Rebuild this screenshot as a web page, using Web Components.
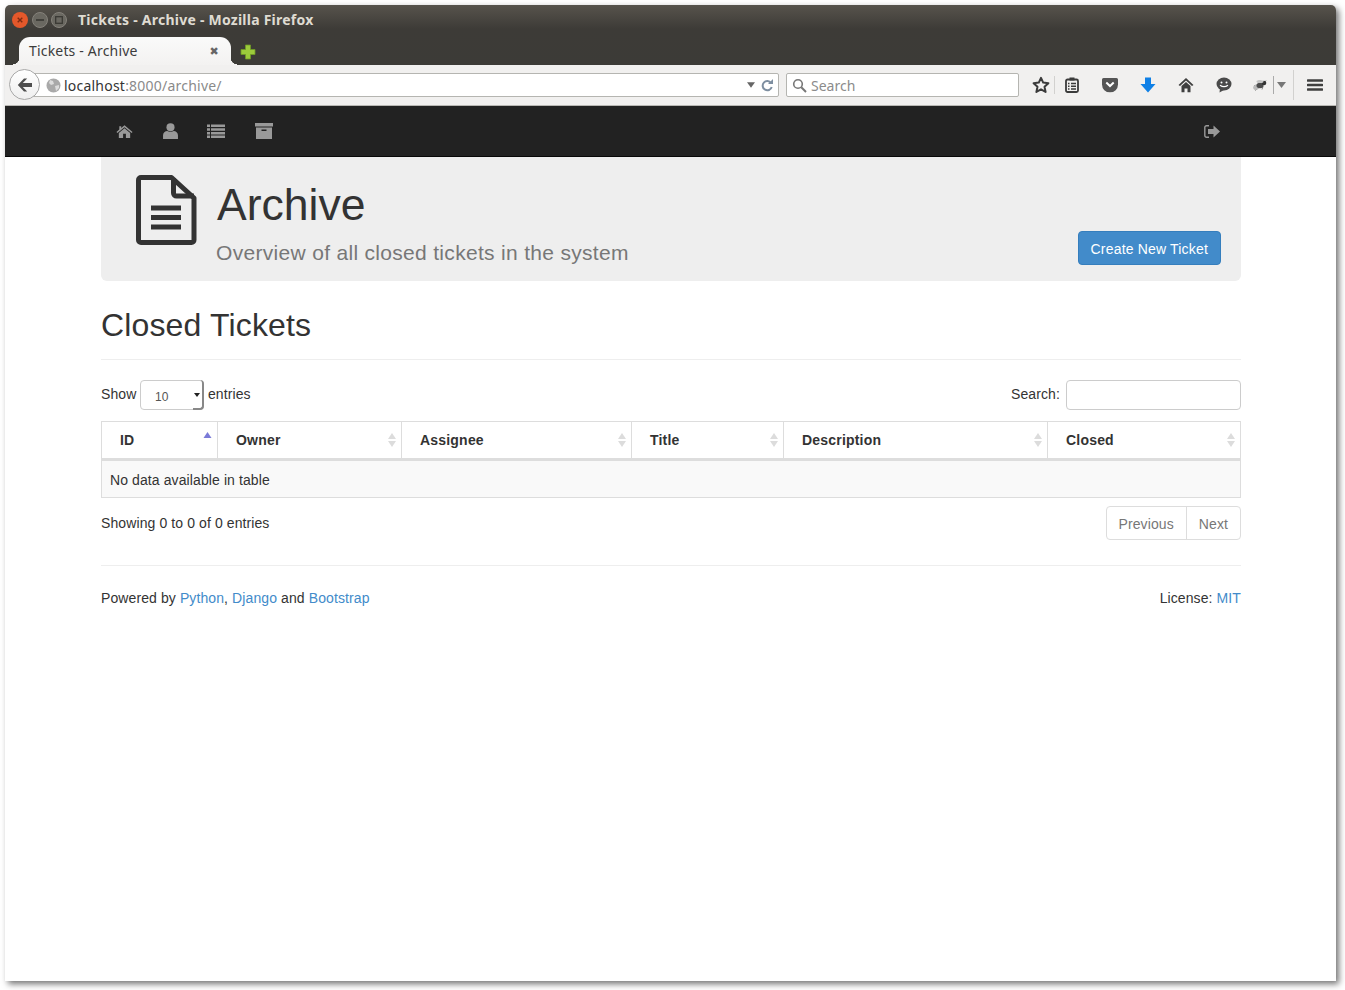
<!DOCTYPE html>
<html>
<head>
<meta charset="utf-8">
<title>Tickets - Archive</title>
<style>
  html, body { margin: 0; height: 100%; background: #fff; }
  body { padding: 5px 9px 9px 5px; box-sizing: border-box; width: 1345px; height: 990px; overflow: hidden; font-family: "Liberation Sans", Arial, sans-serif; }
</style>
</head>
<body>
<browser-window>
  <site-navbar></site-navbar>
  <page-content>
    <archive-header></archive-header>
    <tickets-table></tickets-table>
    <site-footer></site-footer>
  </page-content>
</browser-window>

<script>
class BrowserWindow extends HTMLElement {
  constructor() {
    super();
    this.attachShadow({ mode: "open" }).innerHTML = `
      <style>
        :host { display: flex; flex-direction: column; width: 1331px; height: 976px; background: #fff; border-radius: 5px 5px 0 0; box-shadow: 3px 3px 6px rgba(0,0,0,.55); }
      </style>
      <browser-chrome></browser-chrome>
      <slot></slot>
    `;
  }
}

class BrowserChrome extends HTMLElement {
  constructor() {
    super();
    this.attachShadow({ mode: "open" }).innerHTML = `
      <style>
        :host { display: block; font-family: "Noto Sans", "DejaVu Sans", sans-serif; }
        .top { height: 60px; background: linear-gradient(#57534c, #3d3b37 40%, #3c3b37); border-radius: 5px 5px 0 0; position: relative; }
        .titlebar { height: 30px; display: flex; align-items: center; padding-left: 7px; }
        .ctl { width: 16px; height: 16px; margin-right: 3.5px; flex: none; display: block; }
        .title { color: #dfdbd2; font-weight: 700; font-size: 14px; margin-left: 7.500px; padding-bottom: 2px; letter-spacing: .24px; }
        .tabrow { height: 30px; display: flex; align-items: flex-end; padding-left: 14px; }
        .tab { width: 212px; height: 28px; background: linear-gradient(#fafafa, #f3f2f1); border-radius: 11px 11px 0 0; display: flex; align-items: center; justify-content: space-between; padding: 0 12px 2px 10px; box-sizing: border-box; font-size: 14px; letter-spacing: .18px; color: #3c3c3c; position: relative; }
        .tab::before, .tab::after { content: ""; position: absolute; bottom: 0; width: 6px; height: 7px; }
        .tab::before { left: -6px; background: radial-gradient(circle at 0 0, transparent 6px, #f3f2f1 6.500px); }
        .tab::after { right: -6px; background: radial-gradient(circle at 100% 0, transparent 6px, #f3f2f1 6.500px); }
        .tab b { font-size: 11px; color: #666; }
        .plus { margin: 0 0 5px 9px; display: block; }
        .nav { height: 40px; background: #f1f0ef; border-bottom: 1px solid #b9b8b4; display: flex; align-items: center; position: relative; }
        .back { position: absolute; left: 4px; top: 4px; width: 31px; height: 31px; box-sizing: border-box; border-radius: 50%; background: linear-gradient(#fff, #efefef); border: 1px solid #a8a8a8; z-index: 1; display: flex; align-items: center; justify-content: center; }
        .url { margin-left: 20px; width: 754px; height: 24px; box-sizing: border-box; background: #fff; border: 1px solid #b5b5b1; border-radius: 0 2px 2px 0; display: flex; align-items: center; padding-left: 20px; font-size: 14px; letter-spacing: .22px; color: #333; position: relative; }
        .url span { color: #8a8a8a; }
        .globe { margin-right: 3px; flex: none; display: block; }
        .url .end { margin-left: auto; display: flex; align-items: center; gap: 6px; padding-right: 5px; }
        .search { margin-left: 7px; width: 233px; height: 24px; box-sizing: border-box; background: #fff; border: 1px solid #b5b5b1; border-radius: 2px; display: flex; align-items: center; gap: 4px; padding-left: 5px; font-size: 14px; color: #8b8b8b; }
        .tools { display: flex; align-items: center; flex: 1; position: relative; height: 100%; }
        .tools svg { position: absolute; top: 50%; transform: translateY(-50%); display: block; }
        .sep { position: absolute; width: 1px; background: #d2d1cf; }
      </style>
      <div class="top">
        <div class="titlebar">
          <svg class="ctl" viewBox="0 0 16 16"><circle cx="8" cy="8" r="8" fill="#e4582b"/><path d="M5.700 5.700l4.600 4.600M10.300 5.700l-4.600 4.600" stroke="#7e2c12" stroke-width="1.400"/></svg>
          <svg class="ctl" viewBox="0 0 16 16"><circle cx="8" cy="8" r="7.500" fill="#6a6861" stroke="#85827b"/><path d="M4 8h8" stroke="#3a3934" stroke-width="1.700"/></svg>
          <svg class="ctl" viewBox="0 0 16 16"><circle cx="8" cy="8" r="7.500" fill="#6a6861" stroke="#85827b"/><rect x="4.700" y="4.700" width="6.600" height="6.600" fill="none" stroke="#3a3934" stroke-width="1.300"/></svg>
          <div class="title">Tickets - Archive - Mozilla Firefox</div>
        </div>
        <div class="tabrow">
          <div class="tab">Tickets - Archive<b>✖</b></div>
          <svg class="plus" width="16" height="16" viewBox="0 0 16 16"><path d="M5.500 1h5v4.500H15v5h-4.500V15h-5v-4.500H1v-5h4.500z" fill="#9ccb3b" stroke="#6f9a25" stroke-width=".8"/></svg>
        </div>
      </div>
      <div class="nav">
        <div class="back"><svg width="16" height="14" viewBox="0 0 16 14"><path d="M7 0.500L0.800 7 7 13.500h3.200L5.800 9H15V5H5.800l4.400-4.500z" fill="#4e4e4e"/></svg></div>
        <div class="url">
          <svg class="globe" width="15" height="15" viewBox="0 0 15 15"><circle cx="7.500" cy="7.500" r="7" fill="#a9a9a9"/><path d="M4 2l3 1 1 3-3 1-2-2zM9 8l4-1 0 3-3 3z" fill="#dcdcdc"/></svg>
          localhost<span>:8000/archive/</span>
          <div class="end">
            <svg width="8" height="6" viewBox="0 0 9 6"><path d="M0 0h9L4.500 6z" fill="#666"/></svg>
            <svg width="12" height="13" viewBox="0 0 12 13"><path d="M10 4A4.600 4.600 0 1 0 10.700 8" fill="none" stroke="#7d8ea0" stroke-width="2"/><path d="M7 5h5V0z" fill="#7d8ea0"/></svg>
          </div>
        </div>
        <div class="search">
          <svg width="15" height="15" viewBox="0 0 15 15"><circle cx="6" cy="6" r="4.300" fill="none" stroke="#777" stroke-width="1.600"/><path d="M9.300 9.300L14 14" stroke="#777" stroke-width="2"/></svg>
          Search
        </div>
        <div class="tools">
          <svg style="left:13px" width="18" height="18" viewBox="0 0 18 18"><path d="M9 1.800l2.200 4.800 5.200.6-3.900 3.500 1.100 5.200L9 13.300l-4.600 2.600 1.100-5.200L1.600 7.200l5.200-.6z" fill="none" stroke="#3b3b3b" stroke-width="2" stroke-linejoin="round"/></svg>
          <div class="sep" style="left:35px;top:11px;height:18px"></div>
          <svg style="left:46px" width="14" height="16" viewBox="0 0 14 16"><rect x="1" y="2.500" width="12" height="12.500" rx="1.500" fill="none" stroke="#3b3b3b" stroke-width="1.800"/><rect x="4.500" y="0.500" width="5" height="3" fill="#3b3b3b"/><path d="M3 6.500h1.500M6 6.500h5M3 9.200h1.500M6 9.200h5M3 12h1.500M6 12h5" stroke="#3b3b3b" stroke-width="1.400"/></svg>
          <svg style="left:83px" width="16" height="15" viewBox="0 0 16 15"><path d="M1.500 0.500h13A1.500 1.500 0 0 1 16 2v5a8 8 0 0 1-16 0V2A1.500 1.500 0 0 1 1.500 0.500z" fill="#555"/><path d="M4.300 5L8 8.500 11.700 5" fill="none" stroke="#fff" stroke-width="2"/></svg>
          <svg style="left:121px" width="16" height="16" viewBox="0 0 16 16"><path d="M5 0.500h6V7h4.500L8 15.500.500 7H5z" fill="#0f80e6"/></svg>
          <svg style="left:159px" width="16" height="15" viewBox="0 0 16 15"><path d="M8 0.500L15.500 7.500 14 8.500 8 3 2 8.500.500 7.500z" fill="#3f3f3f"/><path d="M3.500 8.500L8 4.500l4.500 4V15H9.500v-4h-3v4h-3z" fill="#3f3f3f"/></svg>
          <svg style="left:197px" width="16" height="16" viewBox="0 0 16 16"><ellipse cx="8" cy="7" rx="7.500" ry="6.500" fill="#4a4a4a"/><path d="M4 11l-.5 4.500L8 13z" fill="#4a4a4a"/><circle cx="5.500" cy="5.500" r="1" fill="#fff"/><circle cx="10.500" cy="5.500" r="1" fill="#fff"/><path d="M4 8.200q4 2.800 8 0" fill="none" stroke="#fff" stroke-width="1.200"/></svg>
          <svg style="left:234px" width="15" height="13" viewBox="0 0 15 13"><path d="M2 12l4-3M1 7l4 0M6 2l2 2M13 2l-2 2M9 11l1-3" stroke="#888" stroke-width="1"/><ellipse cx="3.500" cy="8.500" rx="3.500" ry="2.500" fill="#bbb" transform="rotate(-30 3.500 8.500)"/><ellipse cx="7" cy="7" rx="3.500" ry="2.700" fill="#4c4c4c"/><circle cx="11" cy="4.500" r="2.300" fill="#333"/><ellipse cx="7" cy="3" rx="3.500" ry="1.500" fill="#c4c4c4"/></svg>
          <div class="sep" style="left:254px;top:11px;height:18px;background:#aaa"></div>
          <svg style="left:258px" width="9" height="6" viewBox="0 0 9 6"><path d="M0 0h9L4.500 6z" fill="#777"/></svg>
          <div class="sep" style="left:274px;top:5px;height:30px"></div>
          <svg style="left:288px" width="16" height="13" viewBox="0 0 16 13"><path d="M1 2h14M1 6.500h14M1 11h14" stroke="#3f3f3f" stroke-width="2.600" stroke-linecap="round"/></svg>
        </div>
      </div>
    `;
  }
}

class SiteNavbar extends HTMLElement {
  constructor() {
    super();
    this.attachShadow({ mode: "open" }).innerHTML = `
      <style>
        :host { display: flex; align-items: center; justify-content: space-between; height: 51px; background: #222; border-bottom: 1px solid #080808; box-sizing: border-box; padding: 0 116px 0 111px; flex: none; }
        .left { display: flex; align-items: center; gap: 30px; }
        svg { display: block; }
      </style>
      <div class="left">
        <svg width="17" height="15" viewBox="0 0 18 15"><path d="M9 1L17.500 8 16.500 9.200 9 3 1.500 9.200.500 8l3-2.500V2h2v1.800z" fill="#999"/><path d="M3 9l6-5 6 5v5.500h-4.500V10h-3v4.500H3z" fill="#999"/></svg>
        <svg width="15" height="16" viewBox="0 0 14 15"><circle cx="7" cy="4" r="3.800" fill="#999"/><path d="M0 15v-3.500C0 9 2 7.500 4 7.500c1 1 5 1 6 0 2 0 4 1.500 4 4V15z" fill="#999"/></svg>
        <svg style="margin-left:-1px" width="18" height="15" viewBox="0 0 18 14"><path d="M0 0h3v2.500H0zM4 0h14v2.500H4zM0 3.700h3v2.500H0zM4 3.700h14v2.500H4zM0 7.400h3v2.500H0zM4 7.400h14v2.500H4zM0 11.100h3v2.500H0zM4 11.100h14v2.500H4z" fill="#999"/></svg>
        <svg width="18" height="16" viewBox="0 0 18 16"><path d="M0 0h18v3.500H0zM1 4.500h16V16H1z" fill="#999"/><path d="M6.500 6.500h5v1.500h-5z" fill="#222"/></svg>
      </div>
      <svg width="16" height="13" viewBox="0 0 16 13"><path d="M5 .8H2.500A1.700 1.700 0 0 0 .8 2.500v8a1.700 1.700 0 0 0 1.700 1.700H5" fill="none" stroke="#999" stroke-width="1.400"/><path d="M9.500 0.500L16 6.500 9.500 12.500V9H4V4h5.500z" fill="#999"/></svg>
    `;
  }
}

class PageContent extends HTMLElement {
  constructor() {
    super();
    this.attachShadow({ mode: "open" }).innerHTML = `
      <style>
        :host { display: block; width: 1140px; margin-left: 96px; font-family: "Liberation Sans", Arial, sans-serif; font-size: 14px; line-height: 20px; letter-spacing: .1px; color: #333; }
      </style>
      <slot></slot>
    `;
  }
}

class ArchiveHeader extends HTMLElement {
  constructor() {
    super();
    this.attachShadow({ mode: "open" }).innerHTML = `
      <style>
        :host { display: flex; height: 124px; background: #eee; border-radius: 0 0 6px 6px; box-sizing: border-box; padding: 18px 20px 0 35px; }
        svg { display: block; flex: none; margin-right: 20px; }
        .txt { flex: 1; }
        h1 { margin: 0; font-size: 44.500px; line-height: 50px; font-weight: 400; padding-top: 5px; letter-spacing: 0; }
        p { margin: 0 0 0 -1px; font-size: 21px; line-height: 24px; color: #777; padding-top: 11px; letter-spacing: .31px; }
        .btn { align-self: flex-end; margin-bottom: 16px; height: 34px; box-sizing: border-box; padding: 7px 12px 5px; background: #428bca; border: 1px solid #357ebd; border-radius: 4px; color: #fff; font-size: 14px; line-height: 20px; letter-spacing: .18px; }
      </style>
      <svg width="61" height="70" viewBox="0 0 61 70">
        <path d="M5 2.500h30.500L58 23v42a2.500 2.500 0 0 1-2.500 2.500H5A2.500 2.500 0 0 1 2.500 65V5A2.500 2.500 0 0 1 5 2.500z" fill="none" stroke="#333" stroke-width="5" stroke-linejoin="round"/>
        <path d="M37.500 3v15a3 3 0 0 0 3 3H58" fill="none" stroke="#333" stroke-width="5"/>
        <path d="M15 33h30M15 42.500h30M15 52h30" stroke="#333" stroke-width="5"/>
      </svg>
      <div class="txt">
        <h1>Archive</h1>
        <p>Overview of all closed tickets in the system</p>
      </div>
      <div class="btn">Create New Ticket</div>
    `;
  }
}

class TicketsTable extends HTMLElement {
  constructor() {
    super();
    const cols = [["ID", 116, true], ["Owner", 184], ["Assignee", 230], ["Title", 152], ["Description", 264], ["Closed", 192]];
    const heads = cols.map(([name, w, active]) => `
      <div class="th" style="width:${w}px">${name}
        <svg width="8" height="14" viewBox="0 0 8 14">
          <path d="M4 0L8 6H0z" fill="${active ? "#7b7bd8" : "#dcdcdc"}"/>
          ${active ? "" : '<path d="M0 8h8l-4 6z" fill="#dcdcdc"/>'}
        </svg>
      </div>`).join("");
    this.attachShadow({ mode: "open" }).innerHTML = `
      <style>
        :host { display: block; }
        h2 { margin: 0; padding: 24px 0 14px; font-size: 32px; line-height: 40px; font-weight: 400; letter-spacing: .15px; border-bottom: 1px solid #eee; }
        .controls { display: flex; justify-content: space-between; align-items: center; height: 30px; margin-top: 20px; }
        .controls > div { display: flex; align-items: center; }
        .label { padding-bottom: 2px; }
        .select { width: 64px; height: 30px; box-sizing: border-box; margin: 0 4px 0 3.500px; border: 1px solid #ccc; border-radius: 4px; font-size: 12px; color: #555; padding: 6px 0 0 14px; position: relative; }
        .select b { position: absolute; right: -1px; top: -1px; bottom: -1px; width: 11px; border-right: 2px solid #888; border-bottom: 2px solid #888; border-radius: 0 4px 4px 0; box-sizing: border-box; }
        .select i { position: absolute; right: 3px; top: 12px; border: 3px solid transparent; border-top: 4px solid #222; border-bottom: 0; }
        .field { width: 175px; height: 30px; box-sizing: border-box; margin-left: 6px; border: 1px solid #ccc; border-radius: 4px; background: #fff; }
        .table { margin-top: 11px; border: 1px solid #ddd; }
        .head { display: flex; height: 36px; border-bottom: 3px solid #ddd; }
        .th { box-sizing: border-box; border-right: 1px solid #ddd; padding: 0 0 0 18px; display: flex; align-items: center; font-weight: 700; letter-spacing: .2px; position: relative; flex: none; }
        .th svg { position: absolute; right: 5.500px; top: 11px; }
        .th:first-child svg { top: 10px; right: 5px; width: 9px; }
        .th:last-child { border-right: 0; }
        .empty { height: 36px; line-height: 38px; padding-left: 8px; background: #f9f9f9; }
        .info { display: flex; justify-content: space-between; align-items: flex-start; margin-top: 8px; }
        .info > span { padding-top: 8px; line-height: 18px; }
        .pager { display: flex; height: 34px; box-sizing: border-box; border: 1px solid #ddd; border-radius: 4px; color: #777; line-height: 34px; }
        .pager span { padding: 0 12px; }
        .pager span + span { border-left: 1px solid #ddd; }
      </style>
      <h2>Closed Tickets</h2>
      <div class="controls">
        <div><span class="label">Show</span><div class="select">10<b></b><i></i></div><span class="label">entries</span></div>
        <div><span class="label">Search:</span><div class="field"></div></div>
      </div>
      <div class="table">
        <div class="head">${heads}</div>
        <div class="empty">No data available in table</div>
      </div>
      <div class="info">
        <span>Showing 0 to 0 of 0 entries</span>
        <div class="pager"><span>Previous</span><span>Next</span></div>
      </div>
    `;
  }
}

class SiteFooter extends HTMLElement {
  constructor() {
    super();
    this.attachShadow({ mode: "open" }).innerHTML = `
      <style>
        :host { display: flex; justify-content: space-between; margin-top: 25px; padding-top: 22px; border-top: 1px solid #eee; }
        a { color: #428bca; text-decoration: none; }
      </style>
      <div>Powered by <a href="#">Python</a>, <a href="#">Django</a> and <a href="#">Bootstrap</a></div>
      <div>License: <a href="#">MIT</a></div>
    `;
  }
}

customElements.define("browser-window", BrowserWindow);
customElements.define("browser-chrome", BrowserChrome);
customElements.define("site-navbar", SiteNavbar);
customElements.define("page-content", PageContent);
customElements.define("archive-header", ArchiveHeader);
customElements.define("tickets-table", TicketsTable);
customElements.define("site-footer", SiteFooter);
</script>
</body>
</html>
